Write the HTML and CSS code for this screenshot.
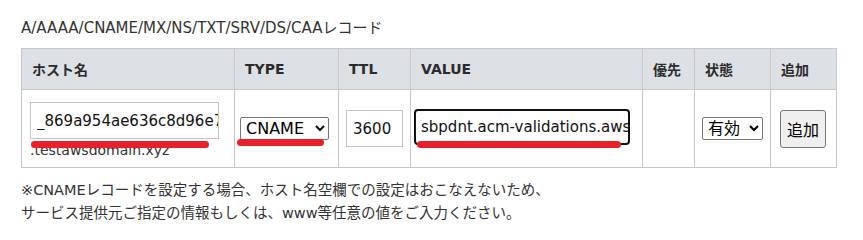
FILE: index.html
```html
<!DOCTYPE html>
<html lang="ja">
<head>
	<meta charset="UTF-8">
	<title>DNSレコード</title>
	<link rel="stylesheet" href="styles.css">
</head>
<body>
	<div class="wrap">
		<p class="title">A/AAAA/CNAME/MX/NS/TXT/SRV/DS/CAAレコード</p>
		<table class="records">
			<colgroup>
				<col class="c-host">
				<col class="c-type">
				<col class="c-ttl">
				<col class="c-value">
				<col class="c-prio">
				<col class="c-state">
				<col class="c-add">
			</colgroup>
			<thead>
				<tr>
					<th>ホスト名</th>
					<th>TYPE</th>
					<th>TTL</th>
					<th>VALUE</th>
					<th>優先</th>
					<th>状態</th>
					<th>追加</th>
				</tr>
			</thead>
			<tbody>
				<tr>
					<td class="td-host">
						<div class="field">
							<input class="txt host-in" type="text" value="_869a954ae636c8d96e7f3b1c2a">
							<span class="mark mark-host"></span>
						</div>
						<div class="domain">.testawsdomain.xyz</div>
					</td>
					<td class="td-type">
						<div class="field">
							<select class="sel sel-type">
								<option>CNAME</option>
							</select>
							<span class="mark mark-type"></span>
						</div>
					</td>
					<td class="td-ttl"><input class="txt ttl-in" type="text" value="3600"></td>
					<td class="td-value">
						<div class="field">
							<div class="txt value-in">sbpdnt.acm-validations.aws<span class="caret"></span></div>
							<span class="mark mark-value"></span>
						</div>
					</td>
					<td></td>
					<td class="td-state">
						<select class="sel sel-state">
							<option>有効</option>
						</select>
					</td>
					<td class="td-add"><button class="btn-add" type="button">追加</button></td>
				</tr>
			</tbody>
		</table>
		<p class="note">※CNAMEレコードを設定する場合、ホスト名空欄での設定はおこなえないため、<br>サービス提供元ご指定の情報もしくは、www等任意の値をご入力ください。</p>
	</div>
</body>
</html>
```

FILE: styles.css
```css
html, body {
	margin: 0;
	padding: 0;
	background: #fff;
}
.wrap {
	padding: 18px 0 0 21px;
	font-family: "DejaVu Sans", "Noto Sans CJK JP", sans-serif;
	font-size: 14px;
	color: #333;
}
.title {
	margin: 0 0 10px;
	line-height: 20px;
	font-size: 15px;
}
.records {
	border-collapse: collapse;
	table-layout: fixed;
	width: 816px;
}
.c-host { width: 213px; }
.c-type { width: 104px; }
.c-ttl { width: 72px; }
.c-value { width: 232px; }
.c-prio { width: 52px; }
.c-state { width: 76px; }
.c-add { width: 66px; }
.records th, .records td {
	border: 1px solid #c6c8cb;
	text-align: left;
}
.records th {
	background: #dde1e6;
	height: 40px;
	padding: 0 10px;
	font-weight: bold;
	color: #2b2b2b;
}
.records td {
	height: 77px;
	padding: 0 8px;
	vertical-align: middle;
}
.records .td-type { padding-left: 5px; }
.records .td-ttl { padding-left: 7px; }
.records .td-value { padding-left: 3px; }
.records .td-state { padding-left: 7px; }
.records .td-add { padding-left: 9px; }
.field {
	position: relative;
	display: inline-block;
}
.txt {
	box-sizing: border-box;
	height: 37px;
	border: 1px solid #c4c4c4;
	padding: 0 0 0 6px;
	font-family: "DejaVu Sans", "Noto Sans CJK JP", sans-serif;
	font-size: 15px;
	color: #111;
	background: #fff;
}
.host-in {
	width: 189px;
	display: block;
	margin-top: 4px;
}
.domain {
	margin-top: 2px;
	line-height: 18px;
	font-size: 14px;
	color: #333;
}
.ttl-in {
	width: 57px;
}
.value-in {
	width: 216px;
	height: 36px;
	border: 2px solid #111;
	border-radius: 4px;
	padding: 0 0 0 5px;
	line-height: 32px;
	white-space: nowrap;
	overflow: hidden;
}
.caret {
	display: inline-block;
	width: 1px;
	height: 20px;
	background: #000;
	vertical-align: middle;
}
.sel {
	box-sizing: border-box;
	height: 23px;
	border: 1px solid #767676;
	border-radius: 2px;
	font-family: "DejaVu Sans", "Noto Sans CJK JP", sans-serif;
	font-size: 16px;
	color: #000;
	background: #fff;
	padding: 0 0 0 1px;
}
.sel-type {
	width: 89px;
}
.sel-state {
	width: 61px;
}
.btn-add {
	width: 46px;
	height: 38px;
	border: 1px solid #767676;
	border-radius: 3px;
	background: #efefef;
	font-family: "Noto Sans CJK JP", sans-serif;
	font-size: 16px;
	color: #000;
	padding: 0;
}
.mark {
	position: absolute;
	height: 7px;
	border-radius: 4px;
	background: #e8202a;
}
.mark-host {
	left: 1px;
	top: 43px;
	width: 178px;
}
.mark-type {
	left: -3px;
	top: 22px;
	width: 87px;
}
.mark-value {
	left: 3px;
	top: 32px;
	width: 204px;
}
.note {
	margin: 11px 0 0;
	line-height: 23px;
	font-size: 14.5px;
}
```
